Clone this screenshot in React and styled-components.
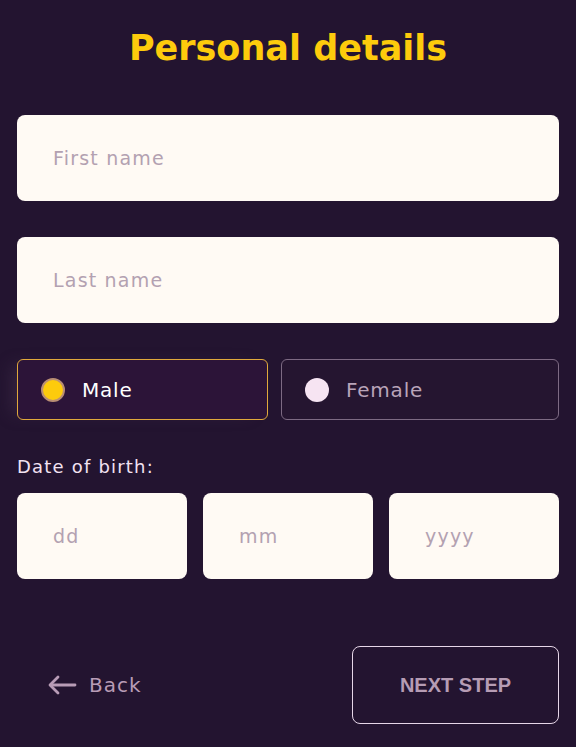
import React from "react";
import styled, { createGlobalStyle } from "styled-components";

const Global = createGlobalStyle`
  html, body { margin: 0; padding: 0; background: #231430; }
  body { font-family: "DejaVu Sans", "Noto Sans", sans-serif; }
  * { box-sizing: border-box; }
`;

const Page = styled.div`
  width: 576px;
  min-height: 747px;
  background: #231430;
  padding: 24px 17px 0;
  display: flex;
  flex-direction: column;
`;

const Title = styled.h1`
  margin: 0;
  height: 48px;
  line-height: 48px;
  text-align: center;
  font-family: "DejaVu Sans", sans-serif;
  font-weight: 700;
  font-size: 35px;
  color: #fdcb0c;
`;

const Form = styled.div`
  margin-top: 43px;
  display: flex;
  flex-direction: column;
`;

const Field = styled.div`
  height: 86px;
  border-radius: 8px;
  background: #fffaf4;
  display: flex;
  align-items: center;
  padding-left: 36px;
  margin-bottom: ${(p) => p.$gap || 0}px;
  font-size: 19px;
  letter-spacing: 1.2px;
  color: #b3a1b1;
`;

const GenderRow = styled.div`
  display: grid;
  grid-template-columns: 251px 1fr;
  gap: 13px;
  margin-bottom: 35px;
`;

const Option = styled.div`
  height: 61px;
  border-radius: 6px;
  border: 1px solid ${(p) => (p.$active ? "#e0a93c" : "#7d6a83")};
  background: ${(p) => (p.$active ? "#2c1438" : "#251530")};
  box-shadow: ${(p) => (p.$active ? "-12px 0 16px -6px rgba(70,50,80,0.45)" : "none")};
  display: flex;
  align-items: center;
  padding-left: 23px;
  gap: 17px;
  font-size: 20px;
  letter-spacing: 0.8px;
  color: ${(p) => (p.$active ? "#ffffff" : "#b9a4b9")};
`;

const Dot = styled.span`
  width: 24px;
  height: 24px;
  border-radius: 50%;
  background: ${(p) => (p.$active ? "#fdcb0c" : "#f6e4f2")};
  border: ${(p) => (p.$active ? "2px solid #b98e74" : "none")};
  flex: none;
`;

const Label = styled.div`
  font-size: 18px;
  letter-spacing: 1.2px;
  color: #f2e2f2;
  margin-bottom: 14px;
  line-height: 24px;
`;

const DateRow = styled.div`
  display: grid;
  grid-template-columns: repeat(3, 1fr);
  gap: 16px;
`;

const Footer = styled.div`
  margin-top: 67px;
  display: flex;
  align-items: center;
  justify-content: space-between;
`;

const Back = styled.div`
  display: flex;
  align-items: center;
  gap: 12px;
  padding-left: 31px;
  font-size: 20px;
  letter-spacing: 1px;
  color: #b89cb6;
`;

const Next = styled.div`
  width: 207px;
  height: 78px;
  border: 1px solid #e6d6e8;
  border-radius: 8px;
  display: flex;
  align-items: center;
  justify-content: center;
  font-family: "Liberation Sans", "DejaVu Sans", sans-serif;
  font-weight: 700;
  font-size: 20px;
  color: #b69cb4;
`;

export default function App() {
  return (
    <>
      <Global />
      <Page>
        <Title>Personal details</Title>
        <Form>
          <Field $gap={36}>First name</Field>
          <Field $gap={36}>Last name</Field>
          <GenderRow>
            <Option $active>
              <Dot $active />
              Male
            </Option>
            <Option>
              <Dot />
              Female
            </Option>
          </GenderRow>
          <Label>Date of birth:</Label>
          <DateRow>
            <Field>dd</Field>
            <Field>mm</Field>
            <Field>yyyy</Field>
          </DateRow>
        </Form>
        <Footer>
          <Back>
            <svg width="29" height="20" viewBox="0 0 29 20" fill="none" stroke="#b89cb6" strokeWidth="2.8" strokeLinecap="round" strokeLinejoin="round">
              <path d="M27 10H3" />
              <path d="M10 2L2 10l8 8" />
            </svg>
            Back
          </Back>
          <Next>NEXT STEP</Next>
        </Footer>
      </Page>
    </>
  );
}
